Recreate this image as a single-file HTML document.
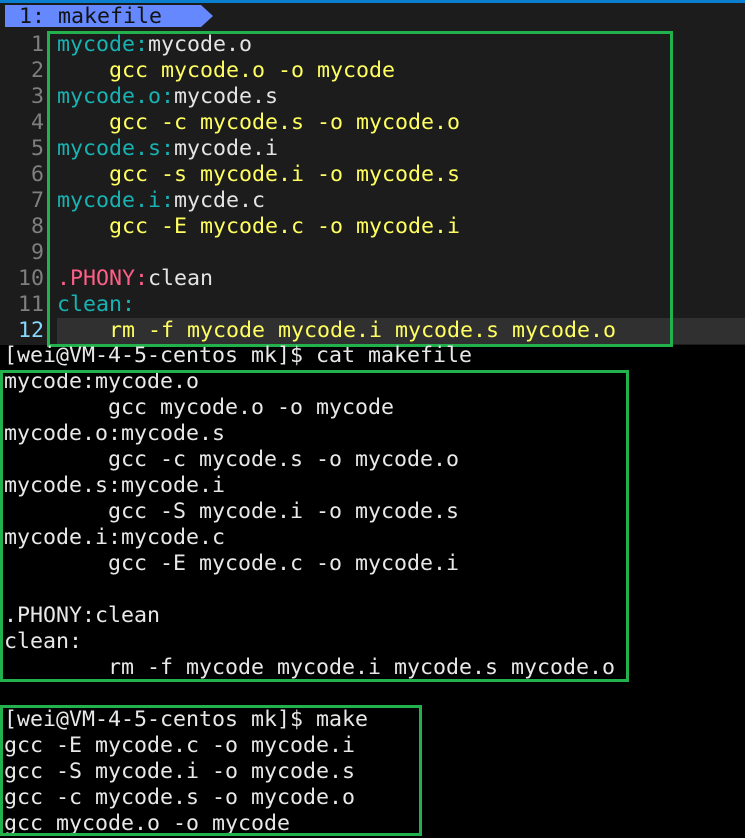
<!DOCTYPE html>
<html><head><style>
body{margin:0;width:745px;height:836px;background:#000;overflow:hidden;position:relative;font-family:"DejaVu Sans Mono","Liberation Mono",monospace;font-size:21.6px}
.ed{position:absolute;left:0;top:3px;width:745px;height:342px;background:#1c1c1c}
.topline{position:absolute;left:0;top:0;width:745px;height:3px;background:#0a7fd0}
.tab{position:absolute;left:5px;top:5px;height:22px;width:196px;background:#6688ff;color:#121212;line-height:23px;padding-left:14px;box-sizing:border-box}
.arrow{position:absolute;left:201px;top:5px;width:0;height:0;border-top:11px solid transparent;border-bottom:11px solid transparent;border-left:12px solid #6688ff}
.l{position:absolute;white-space:pre;line-height:28px;height:26px}
.n{position:absolute;left:0;width:44px;text-align:right;color:#7f7f7f;line-height:28px}
.c{color:#17b2b2}.w{color:#e4e4e4}.y{color:#ffff5f}.r{color:#ff5f87}
.t{color:#e8e8e8;left:4px}
.box{position:absolute;border:3px solid #23b14d;box-sizing:border-box}
</style></head><body>
<div class="topline"></div>
<div class="ed"></div>
<div class="tab">1: makefile</div><div class="arrow"></div>
<div style="position:absolute;left:57px;top:318px;width:688px;height:26px;background:#303030"></div>
<div class="n" style="top:31px">1</div><div class="l" style="left:57px;top:31px"><span class="c">mycode:</span><span class="w">mycode.o</span></div>
<div class="n" style="top:57px">2</div><div class="l y" style="left:57px;top:57px">    gcc mycode.o -o mycode</div>
<div class="n" style="top:83px">3</div><div class="l" style="left:57px;top:83px"><span class="c">mycode.o:</span><span class="w">mycode.s</span></div>
<div class="n" style="top:109px">4</div><div class="l y" style="left:57px;top:109px">    gcc -c mycode.s -o mycode.o</div>
<div class="n" style="top:135px">5</div><div class="l" style="left:57px;top:135px"><span class="c">mycode.s:</span><span class="w">mycode.i</span></div>
<div class="n" style="top:161px">6</div><div class="l y" style="left:57px;top:161px">    gcc -s mycode.i -o mycode.s</div>
<div class="n" style="top:187px">7</div><div class="l" style="left:57px;top:187px"><span class="c">mycode.i:</span><span class="w">mycde.c</span></div>
<div class="n" style="top:213px">8</div><div class="l y" style="left:57px;top:213px">    gcc -E mycode.c -o mycode.i</div>
<div class="n" style="top:239px">9</div>
<div class="n" style="top:265px">10</div><div class="l" style="left:57px;top:265px"><span class="r">.PHONY:</span><span class="w">clean</span></div>
<div class="n" style="top:291px">11</div><div class="l c" style="left:57px;top:291px">clean:</div>
<div class="n" style="top:317px;color:#87d7ff">12</div><div class="l y" style="left:57px;top:317px">    rm -f mycode mycode.i mycode.s mycode.o</div>
<div class="box" style="left:47px;top:31px;width:626px;height:316px"></div>

<div class="l t" style="top:342px">[wei@VM-4-5-centos mk]$ cat makefile</div>
<div class="l t" style="top:368px">mycode:mycode.o</div>
<div class="l t" style="top:394px">        gcc mycode.o -o mycode</div>
<div class="l t" style="top:420px">mycode.o:mycode.s</div>
<div class="l t" style="top:446px">        gcc -c mycode.s -o mycode.o</div>
<div class="l t" style="top:472px">mycode.s:mycode.i</div>
<div class="l t" style="top:498px">        gcc -S mycode.i -o mycode.s</div>
<div class="l t" style="top:524px">mycode.i:mycode.c</div>
<div class="l t" style="top:550px">        gcc -E mycode.c -o mycode.i</div>
<div class="l t" style="top:602px">.PHONY:clean</div>
<div class="l t" style="top:628px">clean:</div>
<div class="l t" style="top:654px">        rm -f mycode mycode.i mycode.s mycode.o</div>
<div class="box" style="left:0;top:370px;width:629px;height:312px"></div>

<div class="l t" style="top:706px">[wei@VM-4-5-centos mk]$ make</div>
<div class="l t" style="top:732px">gcc -E mycode.c -o mycode.i</div>
<div class="l t" style="top:758px">gcc -S mycode.i -o mycode.s</div>
<div class="l t" style="top:784px">gcc -c mycode.s -o mycode.o</div>
<div class="l t" style="top:810px">gcc mycode.o -o mycode</div>
<div class="box" style="left:0;top:705px;width:422px;height:131px"></div>
</body></html>
